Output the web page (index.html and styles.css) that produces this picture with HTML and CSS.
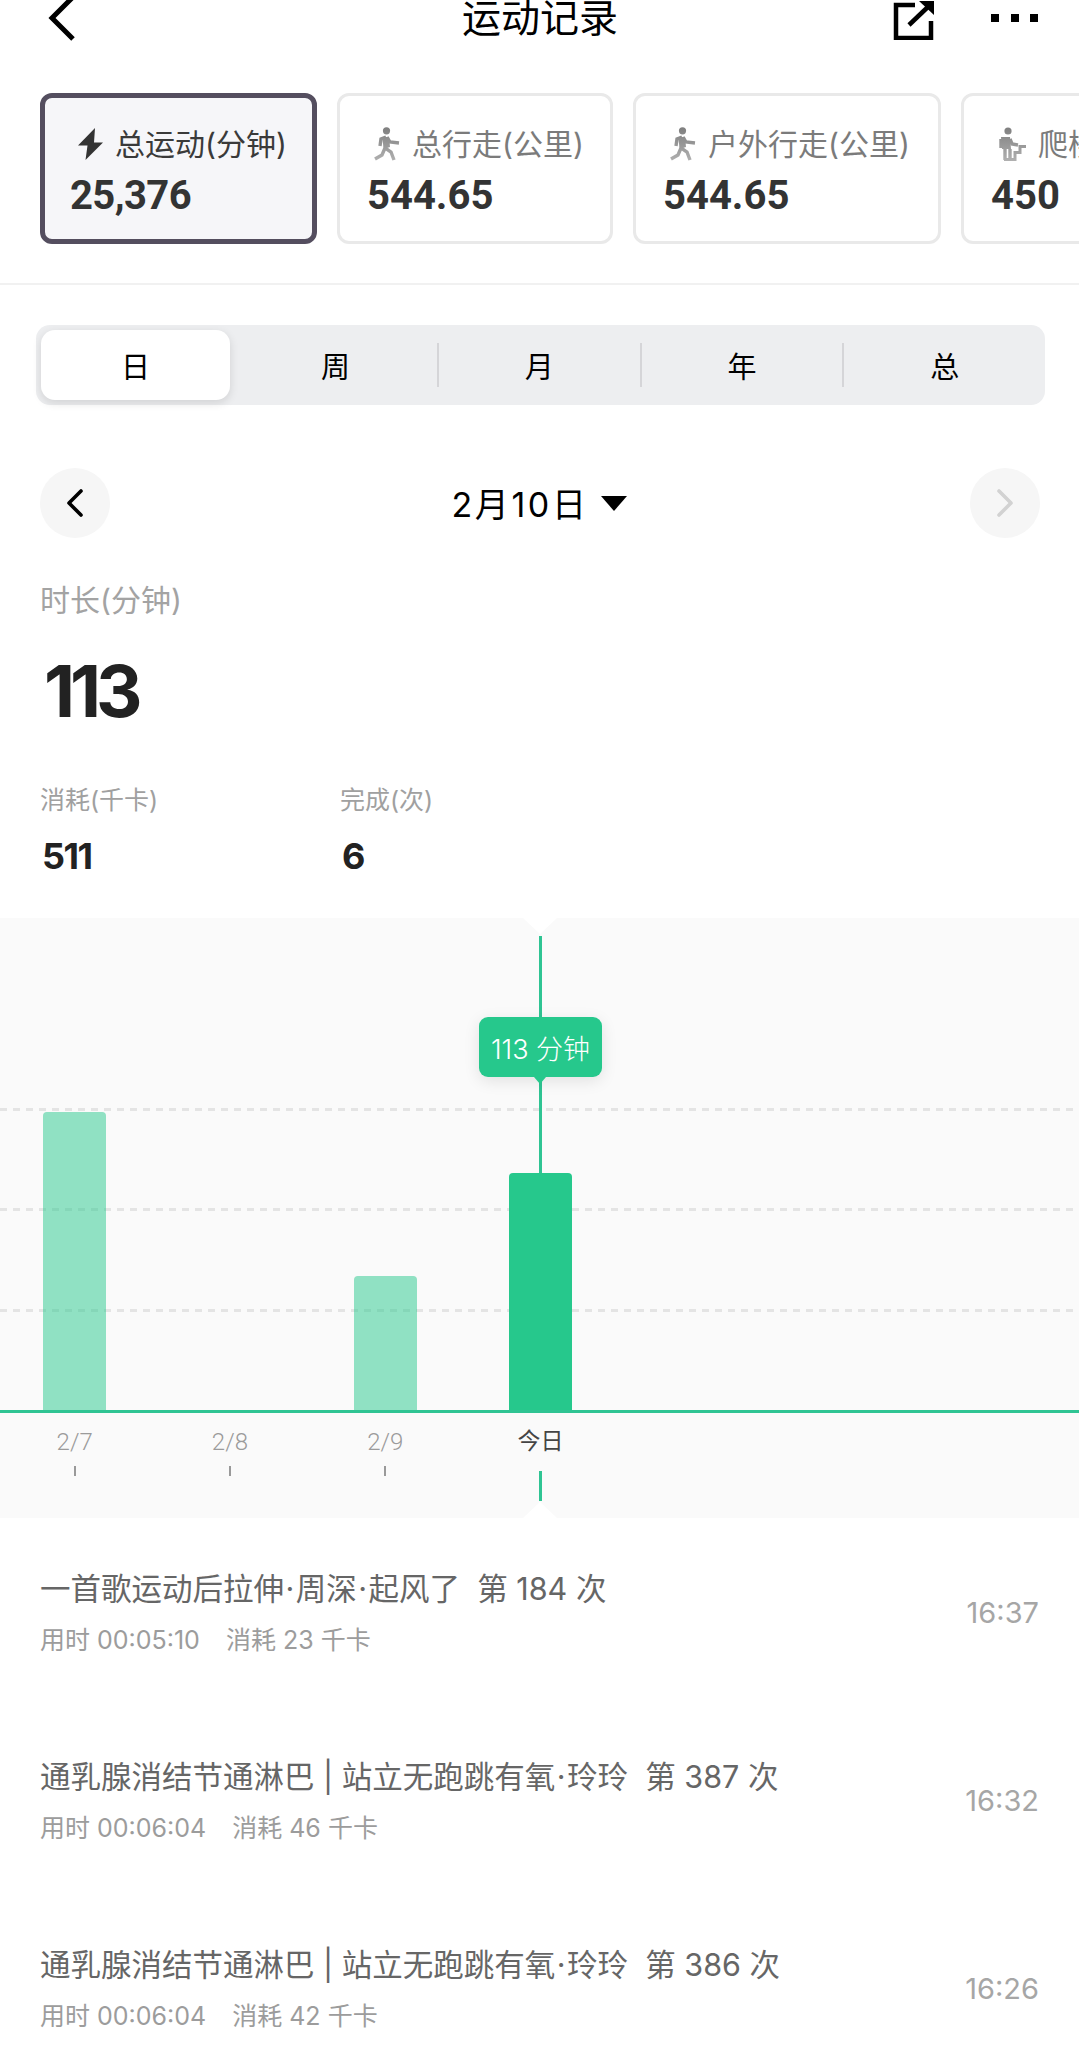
FILE: index.html
```html
<!DOCTYPE html>
<html lang="zh-CN">
<head>
<meta charset="utf-8">
<title>运动记录</title>
<link rel="stylesheet" href="styles.css">
</head>
<body>
<div class="page">
  <svg width="0" height="0" class="defs">
    <defs>
      <linearGradient id="fade" gradientUnits="userSpaceOnUse" x1="0" y1="0" x2="0" y2="34"><stop offset="0" stop-color="#7e7e7e"/><stop offset="1" stop-color="#b0b0b0"/></linearGradient>
    </defs>
  </svg>
  <header class="topbar">
    <svg class="back" viewBox="0 0 30 48" width="30" height="48"><path d="M26 3 5 24l21 21" fill="none" stroke="#000" stroke-width="5"/></svg>
    <h1 class="title">运动记录</h1>
    <svg class="share" viewBox="0 0 44 40" width="44" height="40"><path d="M22 5H3v33h35V21" fill="none" stroke="#000" stroke-width="4.5"/><path d="M16 25 38 4" fill="none" stroke="#000" stroke-width="4.5"/><path d="M26 1h15v14z" fill="#000"/></svg>
    <div class="dots"><i></i><i></i><i></i></div>
  </header>

  <div class="cards">
    <div class="card card-on w1">
      <div class="card-label"><svg class="ic" viewBox="0 0 26 34" width="26" height="34"><path d="M18 1 1 18.5h9.5L8.5 33 26 15.5h-9z" fill="#333"/></svg><span class="l-on">总运动(分钟)</span></div>
      <div class="card-num">25,376</div>
    </div>
    <div class="card w2">
      <div class="card-label"><svg class="ic" viewBox="0 0 26 34" width="26" height="34"><circle cx="12.5" cy="3.8" r="3.6" fill="url(#fade)"/><path d="M12 10 7 12l-1 7M13 10l3 5 9 1M12 10l-1 11 6 4 3 8M11 21l-3 7-7 4" fill="none" stroke="url(#fade)" stroke-width="3.4"/><path d="M8 11l7-1 1 10-6 2z" fill="url(#fade)"/></svg><span>总行走(公里)</span></div>
      <div class="card-num">544.65</div>
    </div>
    <div class="card w3">
      <div class="card-label"><svg class="ic" viewBox="0 0 26 34" width="26" height="34"><circle cx="12.5" cy="3.8" r="3.6" fill="url(#fade)"/><path d="M12 10 7 12l-1 7M13 10l3 5 9 1M12 10l-1 11 6 4 3 8M11 21l-3 7-7 4" fill="none" stroke="url(#fade)" stroke-width="3.4"/><path d="M8 11l7-1 1 10-6 2z" fill="url(#fade)"/></svg><span>户外行走(公里)</span></div>
      <div class="card-num">544.65</div>
    </div>
    <div class="card w4">
      <div class="card-label"><svg class="ic" viewBox="0 0 28 34" width="28" height="34"><circle cx="10" cy="4" r="3.6" fill="url(#fade)"/><path d="M3 12v9M12 12l2 5 6 1M7 22v11M12 22v11" fill="none" stroke="url(#fade)" stroke-width="3.4"/><path d="M3 10h9l1 12H4z" fill="url(#fade)"/><path d="M6 32.5h11v-7h5v-6h6" fill="none" stroke="url(#fade)" stroke-width="3"/></svg><span>爬楼(层)</span></div>
      <div class="card-num">450</div>
    </div>
  </div>

  <div class="divider"></div>

  <div class="segments">
    <div class="seg seg-on">日</div>
    <div class="seg seg-nb">周</div>
    <div class="seg">月</div>
    <div class="seg">年</div>
    <div class="seg seg-last">总</div>
  </div>

  <div class="datenav">
    <div class="circle"><svg viewBox="0 0 20 30" width="20" height="30"><path d="M16 3 4 15l12 12" fill="none" stroke="#000" stroke-width="3.6" stroke-linecap="round" stroke-linejoin="round"/></svg></div>
    <div class="date"><span class="date-text">2月10日</span><span class="caret"></span></div>
    <div class="circle"><svg viewBox="0 0 20 30" width="20" height="30"><path d="M4 3l12 12L4 27" fill="none" stroke="#d2d2d2" stroke-width="3.6" stroke-linecap="round" stroke-linejoin="round"/></svg></div>
  </div>

  <section class="stats">
    <div class="stat-label">时长(分钟)</div>
    <div class="stat-big">113</div>
    <div class="stat-row">
      <div class="stat-col">
        <div class="stat-sm">消耗(千卡)</div>
        <div class="stat-val">511</div>
      </div>
      <div class="stat-col">
        <div class="stat-sm">完成(次)</div>
        <div class="stat-val">6</div>
      </div>
    </div>
  </section>

  <section class="chart">
    <div class="notch notch-top"></div>
    <div class="notch notch-bottom"></div>
    <div class="plot">
      <div class="dash dash1"></div>
      <div class="dash dash2"></div>
      <div class="dash dash3"></div>
      <div class="cursor"></div>
      <div class="tip">113 分钟</div>
      <div class="col"><div class="bar bar-light" style="height:298px"></div></div>
      <div class="col"></div>
      <div class="col"><div class="bar bar-light" style="height:134px"></div></div>
      <div class="col"><div class="bar bar-main" style="height:237px"></div></div>
    </div>
    <div class="axis">
      <div class="tickcol"><span class="tl">2/7</span><i class="tick"></i></div>
      <div class="tickcol"><span class="tl">2/8</span><i class="tick"></i></div>
      <div class="tickcol"><span class="tl">2/9</span><i class="tick"></i></div>
      <div class="tickcol"><span class="tl tl-now">今日</span><i class="tick tick-now"></i></div>
    </div>
  </section>

  <ul class="list">
    <li class="row">
      <div class="row-main">
        <div class="row-title">一首歌运动后拉伸<span class="mid">·</span>周深<span class="mid">·</span>起风了&nbsp; 第 184 次</div>
        <div class="row-sub">用时 00:05:10<span class="sep"></span>消耗 23 千卡</div>
      </div>
      <div class="row-time">16:37</div>
    </li>
    <li class="row">
      <div class="row-main">
        <div class="row-title">通乳腺消结节通淋巴 | 站立无跑跳有氧<span class="mid">·</span>玲玲&nbsp; 第 387 次</div>
        <div class="row-sub">用时 00:06:04<span class="sep"></span>消耗 46 千卡</div>
      </div>
      <div class="row-time">16:32</div>
    </li>
    <li class="row">
      <div class="row-main">
        <div class="row-title">通乳腺消结节通淋巴 | 站立无跑跳有氧<span class="mid">·</span>玲玲&nbsp; 第 386 次</div>
        <div class="row-sub">用时 00:06:04<span class="sep"></span>消耗 42 千卡</div>
      </div>
      <div class="row-time">16:26</div>
    </li>
  </ul>
</div>
</body>
</html>
```

FILE: styles.css
```css
* { box-sizing: border-box; }
html, body { margin: 0; padding: 0; background: #fff; }
body { font-family: "Inter", "Noto Sans CJK SC", sans-serif; color: #000; }
.page { width: 1079px; height: 2067px; overflow: hidden; position: relative; }
.defs { position: absolute; }

.topbar { height: 93px; display: flex; align-items: flex-start; padding: 0 41px 0 47px; overflow: hidden; }
.back { margin-top: -6px; flex: none; }
.title { flex: 1; margin: 0; text-align: center; font-size: 39px; line-height: 36px; font-weight: 400; padding-left: 110px; }
.share { margin-top: 0; flex: none; margin-right: 54px; }
.dots { display: flex; gap: 11.5px; margin-top: 14px; flex: none; }
.dots i { width: 8px; height: 8px; background: #000; display: block; }

.cards { display: flex; gap: 20px; padding: 0 0 0 40px; height: 151px; overflow: hidden; }
.card { flex: none; height: 151px; border: 3px solid #e9e9e9; border-radius: 12px; padding: 0 0 0 27px; background: #fff; }
.card-on { border: 5px solid #544e5f; background: #f6f6f9; padding-left: 25px; }
.w1 { width: 277px; } .w2 { width: 276px; } .w3 { width: 308px; } .w4 { width: 300px; }
.card-label { display: flex; align-items: center; gap: 12px; height: 36px; margin-top: 30px; color: #7b7b7b; font-size: 30px; white-space: nowrap; line-height: 36px; }
.card-on .card-label { margin-top: 28px; }
.ic { flex: none; margin-left: 7px; }
.l-on { color: #3a3a3a; }
.card-num { font-family: "Roboto", sans-serif; font-weight: 700; font-size: 40px; line-height: 48px; margin-top: 10px; color: #333; }
.card-on .card-num { letter-spacing: -.6px; }

.divider { height: 2px; margin-top: 39px; background: #f1f1f1; }

.segments { margin: 40px 34px 0 36px; height: 80px; background: #edeef0; border-radius: 14px; display: flex; padding: 5px 0 5px 5px; align-items: center; }
.seg { flex: 1; height: 44px; display: flex; align-items: center; justify-content: center; font-size: 29px; border-right: 2px solid #d5d5d8; }
.seg-on { flex: none; width: 189px; height: 70px; background: #fff; border-radius: 14px; border-right: 0; box-shadow: 0 3px 10px rgba(0,0,0,.12); }
.seg-nb { flex: none; width: 209px; padding-left: 4px; }
.seg-last { border-right: 0; }

.datenav { margin: 63px 39px 0 40px; height: 70px; display: flex; justify-content: space-between; align-items: center; }
.circle { width: 70px; height: 70px; border-radius: 50%; background: #f6f6f6; display: flex; align-items: center; justify-content: center; }
.date { display: flex; align-items: center; gap: 12px; font-size: 34px; letter-spacing: 2.6px; margin-left: -2px; }
.date-text { position: relative; top: -1px; }
.caret { width: 0; height: 0; border-left: 13.5px solid transparent; border-right: 13.5px solid transparent; border-top: 15px solid #000; }

.stats { padding: 0 40px; }
.stat-label { margin-top: 40px; font-size: 30px; line-height: 44px; color: #a3a3a3; }
.stat-big { font-weight: 700; font-size: 72px; line-height: 84px; margin-top: 27px; margin-left: 4px; letter-spacing: -5px; color: #222; }
.stat-row { display: flex; margin-top: 51px; }
.stat-col { width: 300px; }
.stat-sm { font-size: 25px; line-height: 32px; color: #a0a0a0; }
.stat-val { font-weight: 700; font-size: 36px; line-height: 44px; margin-top: 18px; margin-left: 2px; letter-spacing: -1.5px; color: #222; }

.chart { margin-top: 40px; height: 600px; background: #fafafa; position: relative; }
.notch { position: absolute; left: 523px; width: 34px; height: 16px; background: #fff; }
.notch-top { top: 0; clip-path: polygon(0 0, 100% 0, 50% 100%); }
.notch-bottom { bottom: 0; clip-path: polygon(50% 0, 100% 100%, 0 100%); }
.plot { position: relative; height: 495px; border-bottom: 3px solid #2fc493; display: flex; align-items: flex-end; }
.dash { position: absolute; left: 0; right: 0; height: 3px; background: repeating-linear-gradient(90deg, #e4e4e4 0 7px, transparent 7px 13px); }
.dash1 { top: 190px; } .dash2 { top: 290px; } .dash3 { top: 391px; }
.cursor { position: absolute; left: 538.5px; top: 18px; bottom: 0; width: 3px; background: #2fc493; }
.tip { position: absolute; left: 479px; top: 99px; width: 123px; height: 60px; border-radius: 9px; background: #26c88c; color: #fff; font-size: 27px; font-weight: 300; display: flex; align-items: center; justify-content: center; box-shadow: 0 4px 16px rgba(0,0,0,.1); z-index: 2; }
.tip::after { content: ""; position: absolute; left: 55px; bottom: -7px; border-left: 6.5px solid transparent; border-right: 6.5px solid transparent; border-top: 7px solid #26c88c; }
.col { flex: none; width: 155.3px; display: flex; justify-content: center; position: relative; left: -3px; }
.bar { width: 63px; border-radius: 4px 4px 0 0; position: relative; }
.bar-light { background: rgba(38, 200, 140, .5); }
.bar-main { background: #26c88c; }
.axis { display: flex; position: relative; left: -3px; height: 102px; }
.tickcol { flex: none; width: 155.3px; display: flex; flex-direction: column; align-items: center; }
.tl { font-size: 24px; line-height: 30px; margin-top: 14px; color: #9b9b9b; font-weight: 300; font-family: "Roboto", "Noto Sans CJK SC", sans-serif; }
.tl-now { color: #444; font-size: 23px; font-weight: 400; }
.tick { display: block; width: 2px; height: 10px; margin-top: 9px; background: #999; }
.tick-now { width: 3px; height: 30px; margin-top: 14px; background: #2fc493; }

.list { list-style: none; margin: 0; padding: 0 40px 0 40px; }
.row { height: 188.4px; display: flex; align-items: center; justify-content: space-between; }
.row-title { font-size: 30.5px; line-height: 40px; color: #666; white-space: nowrap; }
.mid { padding: 0 1.5px; }
.sep { display: inline-block; width: 26px; }
.row-sub { font-size: 25px; line-height: 32px; margin-top: 15px; color: #9c9c9c; white-space: nowrap; }
.row-time { font-size: 29px; color: #a6a6a6; font-weight: 400; }
```
